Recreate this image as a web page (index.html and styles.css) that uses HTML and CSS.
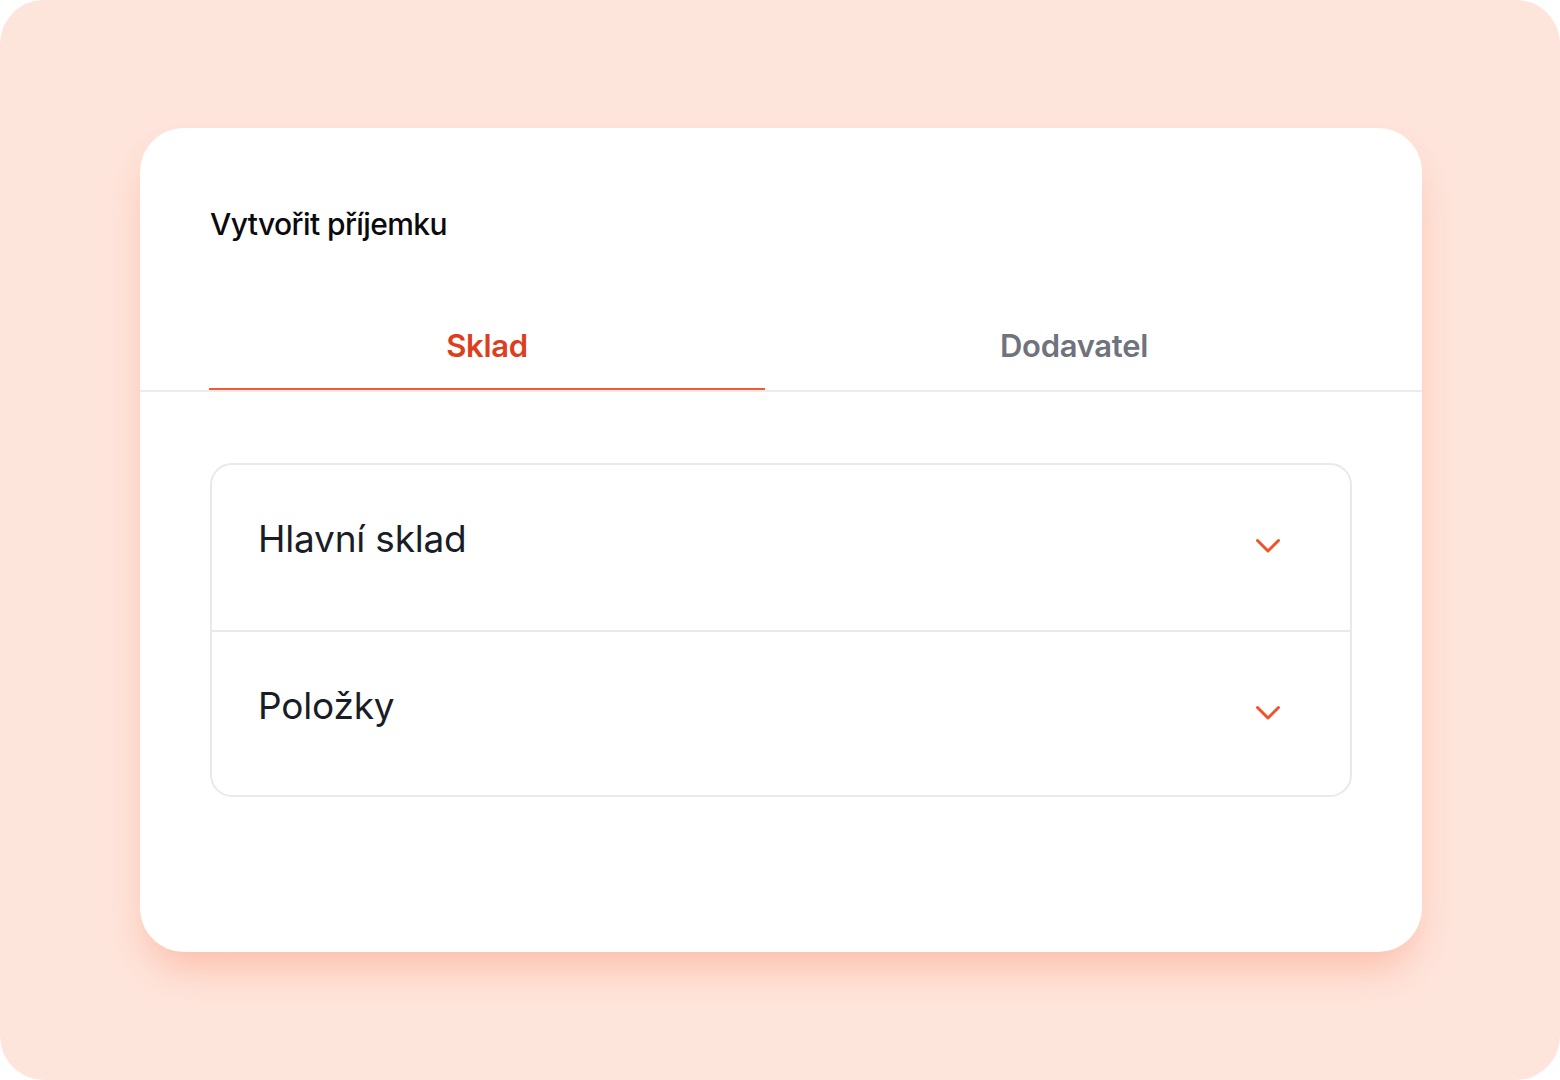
FILE: index.html
```html
<!DOCTYPE html>
<html lang="cs">
<head>
<meta charset="utf-8">
<title>Vytvořit příjemku</title>
<link rel="stylesheet" href="styles.css">
</head>
<body>
<div class="frame">
  <div class="card">
    <h1 class="title">Vytvořit příjemku</h1>
    <div class="tabs">
      <div class="tab tab-active">Sklad</div>
      <div class="tab">Dodavatel</div>
    </div>
    <div class="accordion">
      <div class="row">
        <span class="row-label">Hlavní sklad</span>
        <svg class="chevron" width="26" height="16" viewBox="0 0 26 16"><path d="M2.5 2.5 L13 13 L23.5 2.5" fill="none" stroke="#f2512a" stroke-width="3" stroke-linecap="round" stroke-linejoin="round"/></svg>
      </div>
      <div class="row row-last">
        <span class="row-label">Položky</span>
        <svg class="chevron" width="26" height="16" viewBox="0 0 26 16"><path d="M2.5 2.5 L13 13 L23.5 2.5" fill="none" stroke="#f2512a" stroke-width="3" stroke-linecap="round" stroke-linejoin="round"/></svg>
      </div>
    </div>
  </div>
</div>
</body>
</html>
```

FILE: styles.css
```css
* { box-sizing: border-box; }
html, body { margin: 0; padding: 0; background: #ffffff; }
body { font-family: Inter, "Noto Sans", sans-serif; }

.frame {
  width: 1560px;
  height: 1080px;
  background: #fee5dc;
  border-radius: 44px;
  padding: 128px 138px 128px 140px;
}

.card {
  width: 1282px;
  height: 824px;
  background: #ffffff;
  border-radius: 44px;
  padding-top: 78px;
  box-shadow: 0 22px 40px -8px rgba(250, 120, 80, 0.38);
}

.title {
  margin: 0 0 85px 70px;
  font-size: 30px;
  line-height: 36px;
  font-weight: 500;
  letter-spacing: -0.6px;
  color: #0b0b0f;
}

.tabs {
  display: grid;
  grid-template-columns: 556px 1fr;
  padding: 0 39px 0 69px;
  border-bottom: 2px solid #ececed;
}

.tab {
  text-align: center;
  font-size: 31px;
  line-height: 38px;
  font-weight: 600;
  letter-spacing: -0.3px;
  color: #70737d;
  padding-bottom: 23px;
  border-bottom: 2px solid transparent;
}

.tab-active {
  color: #dc3f1c;
  border-bottom-color: #f05a36;
}

.accordion {
  margin: 71px 0 0 70px;
  width: 1142px;
  border: 2px solid #e9e9eb;
  border-radius: 22px;
}

.row {
  display: flex;
  justify-content: space-between;
  align-items: flex-start;
  height: 167px;
  padding: 52px 69px 0 46px;
  border-bottom: 2px solid #e9e9eb;
}

.row-last {
  height: 163px;
  border-bottom: none;
}

.row-label {
  font-size: 37px;
  line-height: 44px;
  font-weight: 400;
  letter-spacing: -0.2px;
  color: #1a1c26;
}

.chevron {
  margin-top: 21px;
}
```
